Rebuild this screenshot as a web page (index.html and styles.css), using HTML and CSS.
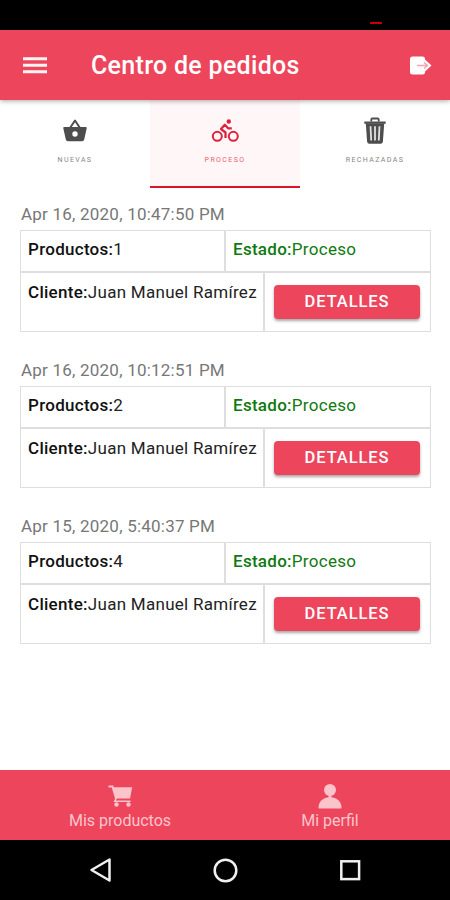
FILE: index.html
```
<!DOCTYPE html>
<html lang="es">
<head>
  <meta charset="UTF-8" />
  <meta name="viewport" content="width=device-width, initial-scale=1.0"/>
  <title>Centro de pedidos</title>
  <link rel="stylesheet" href="styles.css">
</head>
<body>
  <div class="status-bar"><span class="status-mark"></span></div>

  <header class="toolbar">
    <svg class="menu-icon" width="24" height="18" viewBox="0 0 24 18">
      <path d="M0 2.700h24M0 9.200h24M0 15.700h24" stroke="#fff4f4" stroke-width="3"/>
    </svg>
    <h1>Centro de pedidos</h1>
    <svg class="exit-icon" width="22" height="19" viewBox="0 0 22 19">
      <rect x="0" y="0.500" width="15" height="18" rx="2.500" fill="#fff"/>
      <path d="M15 3.500l6.500 6-6.500 6z" fill="#fff"/>
      <path d="M7 9.500h10M14 6.500l3.500 3-3.500 3" fill="none" stroke="#f5a3ae" stroke-width="1.500"/>
    </svg>
  </header>

  <nav class="tabs">
    <div class="tab">
      <svg width="26" height="28" viewBox="0 0 26 28">
        <path d="M8 11l5-7.500 5 7.500" fill="none" stroke="#4d4d4d" stroke-width="2" stroke-linejoin="round"/>
        <path fill="#4d4d4d" fill-rule="evenodd" d="M2.300 10h21.400q1.300 0 1 1.300l-2.500 11.200q-.4 1.800-2 1.800H5.800q-1.600 0-2-1.800L1.300 11.300Q1 10 2.300 10zM13 14.300a2.700 2.700 0 1 0 0 5.400 2.700 2.700 0 0 0 0-5.400z"/>
      </svg>
      <span>NUEVAS</span>
    </div>
    <div class="tab active">
      <svg width="28" height="28" viewBox="0 0 28 28">
        <g fill="none" stroke="#e0213c" stroke-width="2">
          <circle cx="6.300" cy="19.300" r="4.500"/>
          <circle cx="22.300" cy="19.300" r="4.500"/>
          <path d="M20.800 11.300h-3.700l-3.300-3.500-3.800 4.200 4.500 3.500v5.500" stroke-width="2.300" stroke-linejoin="round"/>
        </g>
        <circle cx="17.800" cy="4.500" r="2.200" fill="#e0213c"/>
      </svg>
      <span>PROCESO</span>
    </div>
    <div class="tab">
      <svg width="24" height="28" viewBox="0 0 24 28">
        <path d="M8.300 4.500V2.500q0-1 1-1h5.400q1 0 1 1v2" fill="none" stroke="#4d4d4d" stroke-width="1.800"/>
        <path d="M1.300 4.500h21.400v2.300H1.300z" fill="#4d4d4d"/>
        <path d="M2.800 6.500h18.400l-1.300 18q-.2 2.200-2.300 2.200H6.400q-2.100 0-2.300-2.200z" fill="#4d4d4d"/>
        <path d="M7.500 9.300l.7 14.200M12 9.300v14.200M16.500 9.300l-.7 14.200" stroke="#e0e0e0" stroke-width="1.800"/>
      </svg>
      <span>RECHAZADAS</span>
    </div>
  </nav>

  <main class="orders">
    <section class="order">
      <p class="date">Apr 16, 2020, 10:47:50 PM</p>
      <div class="row">
        <div class="cell half"><b>Productos:</b>1</div>
        <div class="cell state"><b>Estado:</b>Proceso</div>
      </div>
      <div class="row detail">
        <div class="cell client"><b>Cliente:</b>Juan Manuel Ramírez</div>
        <div class="cell action"><button type="button">DETALLES</button></div>
      </div>
    </section>

    <section class="order">
      <p class="date">Apr 16, 2020, 10:12:51 PM</p>
      <div class="row">
        <div class="cell half"><b>Productos:</b>2</div>
        <div class="cell state"><b>Estado:</b>Proceso</div>
      </div>
      <div class="row detail">
        <div class="cell client"><b>Cliente:</b>Juan Manuel Ramírez</div>
        <div class="cell action"><button type="button">DETALLES</button></div>
      </div>
    </section>

    <section class="order">
      <p class="date">Apr 15, 2020, 5:40:37 PM</p>
      <div class="row">
        <div class="cell half"><b>Productos:</b>4</div>
        <div class="cell state"><b>Estado:</b>Proceso</div>
      </div>
      <div class="row detail">
        <div class="cell client"><b>Cliente:</b>Juan Manuel Ramírez</div>
        <div class="cell action"><button type="button">DETALLES</button></div>
      </div>
    </section>
  </main>

  <footer class="bottom-tabs">
    <div class="bottom-tab">
      <svg width="26" height="26" viewBox="0 0 26 26">
        <path d="M1.500 3.500h4l3.700 12.500" fill="none" stroke="#fbc4cb" stroke-width="2"/>
        <path d="M5.800 4.300h19.400l-2.200 11.200H9z" fill="#fbc4cb"/>
        <circle cx="9.500" cy="21.500" r="2.200" fill="#fbc4cb"/>
        <circle cx="21.500" cy="21.500" r="2.200" fill="#fbc4cb"/>
        <path d="M9 15.500l-1.300 2.800h15.800" fill="none" stroke="#fbc4cb" stroke-width="1.500"/>
      </svg>
      <span>Mis productos</span>
    </div>
    <div class="bottom-tab">
      <svg width="26" height="26" viewBox="0 0 26 26">
        <circle cx="13" cy="7" r="6" fill="#fbc4cb"/>
        <path d="M11.500 12h3v3h-3z" fill="#fbc4cb"/>
        <path d="M1.500 24.700C1.500 18.500 6 14.200 13 14.200s11.500 4.300 11.500 10.500q0 .8-.8.8H2.300q-.8 0-.8-.8z" fill="#fbc4cb"/>
      </svg>
      <span>Mi perfil</span>
    </div>
  </footer>

  <div class="system-nav">
    <svg width="24" height="26" viewBox="0 0 24 26">
      <path d="M20.500 2.500v21L2.500 13z" fill="none" stroke="#f0f0f0" stroke-width="2.500" stroke-linejoin="round"/>
    </svg>
    <svg width="26" height="26" viewBox="0 0 26 26">
      <circle cx="12.500" cy="13.500" r="10.800" fill="none" stroke="#f0f0f0" stroke-width="2.500"/>
    </svg>
    <svg width="24" height="26" viewBox="0 0 24 26">
      <rect x="3.300" y="4.300" width="17.800" height="17.800" fill="none" stroke="#f0f0f0" stroke-width="2.500"/>
    </svg>
  </div>
</body>
</html>
```
FILE: styles.css
```
* {
  box-sizing: border-box;
  font-family: Roboto, 'Liberation Sans', sans-serif;
}

body {
  margin: 0;
  height: 900px;
  display: flex;
  flex-direction: column;
  overflow: hidden;
  background: #ffffff;
  color: #222222;
}

.status-bar {
  height: 30px;
  background: #000000;
  display: flex;
  justify-content: flex-end;
  align-items: flex-end;
  padding: 0 68px 6px 0;
}

.status-mark {
  width: 12px;
  height: 2px;
  background: #c80000;
}

.toolbar {
  height: 70px;
  background: #ed455c;
  display: flex;
  align-items: center;
  padding: 0 18px 0 23px;
  box-shadow: 0 1px 5px rgba(0, 0, 0, 0.35);
  z-index: 1;
}

.toolbar h1 {
  flex: 1;
  margin: 2px 0 0 44px;
  color: #ffffff;
  font-size: 25px;
  font-weight: 500;
  line-height: 30px;
  letter-spacing: 0.3px;
}

.tabs {
  height: 88px;
  display: flex;
}

.tab {
  flex: 1;
  display: flex;
  flex-direction: column;
  align-items: center;
  padding-top: 17px;
  border-bottom: 2px solid transparent;
}

.tab span {
  margin-top: 10px;
  color: #858585;
  font-size: 7px;
  line-height: 10px;
  letter-spacing: 1.4px;
}

.tab.active {
  background: #fff6f8;
  border-bottom-color: #d9152b;
}

.tab.active span {
  color: #ee5a6e;
}

.orders {
  flex: 1;
  padding: 15px 19px 0 20px;
}

.order {
  height: 156.200px;
}

.date {
  margin: 0;
  padding-left: 1px;
  color: #777777;
  font-size: 17px;
  line-height: 22px;
  letter-spacing: 0.22px;
  height: 27px;
}

.row {
  display: flex;
  height: 42px;
  border: 1px solid #dedede;
}

.row.detail {
  height: 60px;
}

.cell {
  padding: 7px 7px 0;
  font-size: 17px;
  line-height: 22px;
  letter-spacing: 0.28px;
  white-space: nowrap;
}

.detail .cell {
  padding-top: 8px;
}

.cell b {
  color: #111111;
  font-weight: 500;
}

.half {
  width: 203px;
}

.state,
.state b {
  color: #0f7a0f;
}

.cell + .cell {
  border-left: 2px solid #dedede;
}

.state {
  flex: 1;
}

.client {
  width: 242px;
}

.detail .action {
  flex: 1;
  padding: 12px 10px 0 9px;
}

button {
  display: block;
  width: 100%;
  height: 34px;
  padding: 0 0 1px;
  border: none;
  border-radius: 4px;
  background: #ed455c;
  color: #ffffff;
  font-size: 16.500px;
  font-weight: 500;
  letter-spacing: 0.9px;
  box-shadow: 0 2px 3px rgba(0, 0, 0, 0.35);
}

.bottom-tabs {
  height: 70px;
  background: #ed455c;
  display: flex;
  padding: 0 15px;
}

.bottom-tab {
  flex: 1;
  display: flex;
  flex-direction: column;
  align-items: center;
  padding-top: 13px;
  color: #fbc4cb;
  font-size: 16px;
  line-height: 20px;
}

.bottom-tab span {
  margin-top: 2px;
}

.system-nav {
  height: 60px;
  background: #000000;
  display: flex;
  justify-content: space-between;
  align-items: center;
  padding: 0 88px 0 89px;
}
```
